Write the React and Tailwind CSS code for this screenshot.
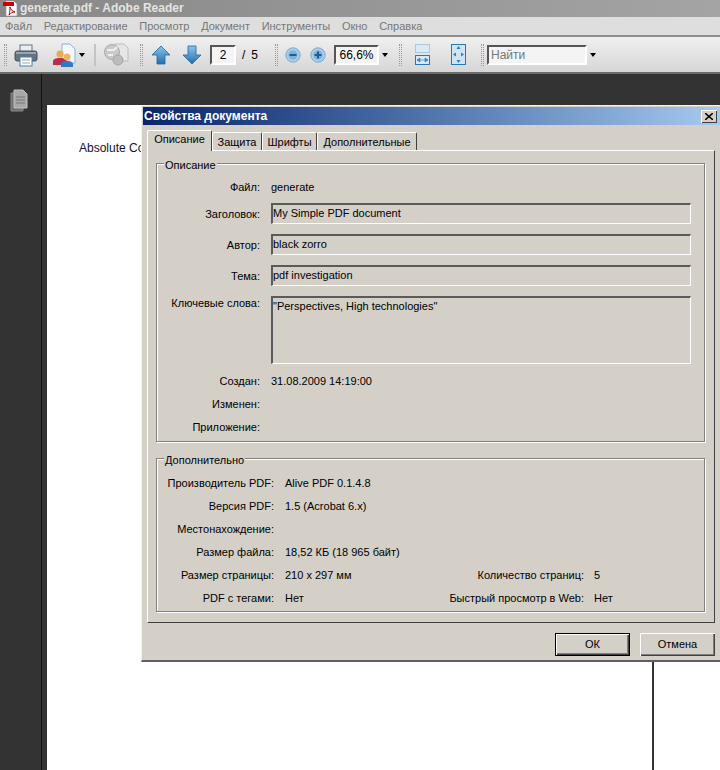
import React from "react";

const font = { fontFamily: '"Liberation Sans", Arial, sans-serif' };

const Grip = () => <div className="mx-[4px] h-[22px] w-[3px] border-x border-dotted border-[#9a9a9a]" />;

const Caret = () => (
  <svg width="6" height="4" viewBox="0 0 6 4" className="mx-[3px]">
    <path d="M0 0h6L3 4z" fill="#000" />
  </svg>
);

const PdfIcon = () => (
  <svg width="17" height="17" viewBox="0 0 17 17">
    <path d="M4 1h8l3 3v12H4z" fill="#fff" stroke="#999" strokeWidth="0.7" />
    <rect x="1" y="2" width="11" height="4" fill="#c00" />
    <path d="M7 15c1-3 1-6 1-8 1 3 2 4 5 5-3 0-4 1-6 3z" fill="none" stroke="#c00" />
  </svg>
);

const Printer = () => (
  <svg width="24" height="24" viewBox="0 0 24 24">
    <rect x="6" y="2" width="12" height="7" fill="#e8edf2" stroke="#6b7680" />
    <rect x="1" y="8" width="22" height="10" rx="2" fill="#66737f" stroke="#46525c" />
    <rect x="2" y="9" width="20" height="2" fill="#9aa5af" />
    <rect x="6" y="14" width="12" height="9" fill="#fff" stroke="#3f86b8" />
    <path d="M8 17h8M8 20h8" stroke="#9aa" />
  </svg>
);

const Share = () => (
  <svg width="24" height="24" viewBox="0 0 24 24">
    <path d="M10 1h8l5 5v14H10z" fill="#f4f7fb" stroke="#8fb0d3" />
    <circle cx="8" cy="11" r="3.5" fill="#eea84e" />
    <path d="M1 22v-3c0-3 2-4 7-4s7 1 7 4v3z" fill="#b5304d" />
    <circle cx="15" cy="14" r="3.5" fill="#f0b35c" />
    <path d="M9 24v-2c0-3 2-4 6-4s6 1 6 4v2z" fill="#2c7cc0" />
  </svg>
);

const Review = () => (
  <svg width="26" height="24" viewBox="0 0 26 24">
    <path d="M12 1h9l4 4v13H12z" fill="#e6e6e6" stroke="#bdbdbd" />
    <circle cx="9" cy="9" r="7.5" fill="#c9c9c9" stroke="#aaa" />
    <path d="M4 7h7l3-3M5 12h5" stroke="#eee" strokeWidth="2" fill="none" />
    <circle cx="15" cy="17" r="5" fill="#bcbcbc" stroke="#a5a5a5" />
  </svg>
);

const Arrow = ({ down }) => (
  <svg width="20" height="20" viewBox="0 0 20 20" className={down ? "rotate-180" : ""}>
    <defs>
      <linearGradient id={down ? "ad" : "au"} x1="0" y1="0" x2="0" y2="1">
        <stop offset="0" stopColor={down ? "#1f6fb0" : "#8cc4ea"} />
        <stop offset="1" stopColor={down ? "#8cc4ea" : "#1f6fb0"} />
      </linearGradient>
    </defs>
    <path d="M10 1l9 9h-5v9H6v-9H1z" fill={`url(#${down ? "ad" : "au"})`} stroke="#1d679f" strokeWidth="0.8" />
  </svg>
);

const Zoom = ({ plus }) => (
  <svg width="16" height="16" viewBox="0 0 16 16">
    <circle cx="8" cy="8" r="7.2" fill="#a9cde8" stroke="#7fa8c9" />
    <circle cx="8" cy="8" r="4.5" fill="#7fb0d8" />
    <path d={plus ? "M4.5 8h7M8 4.5v7" : "M4.5 8h7"} stroke="#1c5c9c" strokeWidth="2" />
  </svg>
);

const FitWidth = () => (
  <svg width="17" height="22" viewBox="0 0 17 22">
    <rect x="1.5" y="0.5" width="14" height="8" fill="#dbe9f5" stroke="#a9c8e2" />
    <rect x="1.5" y="11.5" width="14" height="9" fill="#dbe9f5" stroke="#2b76b4" />
    <path d="M3 16h11M3 16l3-2v4zM14 16l-3-2v4z" fill="#3d87c2" stroke="#3d87c2" strokeWidth="0.7" />
  </svg>
);

const FitPage = () => (
  <svg width="17" height="22" viewBox="0 0 17 22">
    <rect x="1.5" y="0.5" width="14" height="20" fill="#cfe3f4" stroke="#2b76b4" />
    <path d="M8.5 2l2 3h-4zM8.5 19l2-3h-4zM3 10.5l3-2v4zM14 10.5l-3-2v4z" fill="#2f7cba" />
  </svg>
);

const PagesIcon = () => (
  <svg width="18" height="23" viewBox="0 0 18 23">
    <path d="M1 4h12v18H1z" fill="#6f6f6f" stroke="#8a8a8a" />
    <path d="M4 1h9l4 4v14H4z" fill="#a8a8a8" stroke="#c0c0c0" />
    <path d="M6 8h9M6 11h9M6 14h9" stroke="#777" />
  </svg>
);

const Field = ({ value, className }) => (
  <div className={`ml-[11px] w-[420px] border border-t-2 border-l-2 border-t-[#5a5a5a] border-l-[#5a5a5a] border-r-white border-b-white bg-[#d4d0c8] text-[11px] leading-[15px] text-black ${className}`}>
    {value}
  </div>
);

const Label = ({ children, wide }) => (
  <div className={`${wide ? "w-[117px]" : "w-[103px]"} shrink-0 whitespace-nowrap text-right text-[11px] leading-[14px] text-black`}>
    {children}
  </div>
);

const Row = ({ label, value, wide, className }) => (
  <div className={`flex items-center ${className}`}>
    <Label wide={wide}>{label}</Label>
    <div className="ml-[11px] h-[14px] text-[11px] leading-[14px] text-black">{value}</div>
  </div>
);

const Group = ({ title, className, children }) => (
  <div className={`relative border border-[#808080] shadow-[inset_1px_1px_0_#fff,1px_1px_0_#fff] ${className}`}>
    <div className="absolute left-[7px] top-[-5px] bg-[#d4d0c8] px-[1px] text-[11px] leading-[13px] text-black">{title}</div>
    {children}
  </div>
);

const Tab = ({ children, active, className }) => (
  <div
    className={
      active
        ? `relative z-10 flex h-[21px] items-center justify-center rounded-t-[2px] border border-b-0 border-l-white border-t-white border-r-[#404040] bg-[#d4d0c8] pb-[3px] text-[11px] text-black ${className}`
        : `mt-[2px] flex h-[19px] items-center justify-center rounded-t-[2px] border border-b-0 border-l-white border-t-white border-r-[#404040] bg-[#d4d0c8] text-[11px] text-black ${className}`
    }
  >
    {children}
  </div>
);

const Button = ({ children, primary }) => (
  <div
    className={
      primary
        ? "flex h-[23px] w-[75px] items-center justify-center border border-black bg-[#d4d0c8] text-[11px] text-black shadow-[inset_1px_1px_0_#fff,inset_-1px_-1px_0_#404040,inset_-2px_-2px_0_#808080]"
        : "flex h-[23px] w-[75px] items-center justify-center bg-[#d4d0c8] text-[11px] text-black shadow-[inset_1px_1px_0_#fff,inset_-1px_-1px_0_#404040,inset_-2px_-2px_0_#808080]"
    }
  >
    {children}
  </div>
);

const PropertiesDialog = () => (
  <div className="absolute left-[141px] top-[105px] flex h-[557px] w-[600px] flex-col border-t border-l border-t-[#f4f2ec] border-l-[#f4f2ec] border-b-2 border-b-[#5f5f5f] bg-[#d4d0c8] pl-[1px] pt-[1px]">
    <div className="flex h-[18px] w-[578px] items-center justify-between bg-gradient-to-r from-[#0a246a] to-[#a6caf0] pl-[1px] pr-[4px]">
      <span className="text-[12px] font-bold text-white">Свойства документа</span>
      <div className="flex h-[13px] w-[16px] items-center justify-center bg-[#d4d0c8] shadow-[inset_1px_1px_0_#fff,inset_-1px_-1px_0_#404040]">
        <svg width="8" height="7" viewBox="0 0 8 7">
          <path d="M0 0l8 7M8 0L0 7" stroke="#000" strokeWidth="1.5" />
        </svg>
      </div>
    </div>

    <div className="ml-[4px] mt-[5px] flex">
      <Tab active className="w-[65px]">Описание</Tab>
      <Tab className="w-[50px]">Защита</Tab>
      <Tab className="w-[55px]">Шрифты</Tab>
      <Tab className="w-[100px]">Дополнительные</Tab>
    </div>

    <div className="-mt-[1px] ml-[4px] h-[473px] w-[568px] border border-l-white border-t-white border-r-[#404040] border-b-[#404040] pl-[8px] pt-[12px]">
      <Group title="Описание" className="h-[279px] w-[549px] pt-[16px]">
        <Row label="Файл:" value="generate" />
        <div className="mt-[9px] flex items-start">
          <div className="mt-[4px]"><Label>Заголовок:</Label></div>
          <Field value="My Simple PDF document" className="h-[21px] pt-[1px]" />
        </div>
        <div className="mt-[10px] flex items-start">
          <div className="mt-[4px]"><Label>Автор:</Label></div>
          <Field value="black zorro" className="h-[21px] pt-[1px]" />
        </div>
        <div className="mt-[10px] flex items-start">
          <div className="mt-[4px]"><Label>Тема:</Label></div>
          <Field value="pdf investigation" className="h-[21px] pt-[1px]" />
        </div>
        <div className="mt-[10px] flex items-start">
          <Label>Ключевые слова:</Label>
          <Field value={'"Perspectives, High technologies"'} className="h-[68px] pt-[1px]" />
        </div>
        <Row label="Создан:" value="31.08.2009 14:19:00" className="mt-[10px]" />
        <Row label="Изменен:" value="" className="mt-[9px]" />
        <Row label="Приложение:" value="" className="mt-[9px]" />
      </Group>

      <Group title="Дополнительно" className="mt-[16px] h-[154px] w-[549px] pt-[17px]">
        <Row wide label="Производитель PDF:" value="Alive PDF 0.1.4.8" />
        <Row wide label="Версия PDF:" value="1.5 (Acrobat 6.x)" className="mt-[9px]" />
        <Row wide label="Местонахождение:" value="" className="mt-[9px]" />
        <Row wide label="Размер файла:" value="18,52 КБ (18 965 байт)" className="mt-[9px]" />
        <div className="mt-[9px] flex items-center">
          <div className="w-[300px]">
            <Row wide label="Размер страницы:" value="210 x 297 мм" />
          </div>
          <div className="w-[127px] whitespace-nowrap text-right text-[11px] leading-[14px] text-black">Количество страниц:</div>
          <div className="ml-[10px] text-[11px] leading-[14px] text-black">5</div>
        </div>
        <div className="mt-[9px] flex items-center">
          <div className="w-[300px]">
            <Row wide label="PDF с тегами:" value="Нет" />
          </div>
          <div className="flex w-[127px] justify-end whitespace-nowrap text-[11px] leading-[14px] text-black">Быстрый просмотр в Web:</div>
          <div className="ml-[10px] text-[11px] leading-[14px] text-black">Нет</div>
        </div>
      </Group>
    </div>

    <div className="ml-[412px] mt-[10px] flex gap-[10px]">
      <Button primary>ОК</Button>
      <Button>Отмена</Button>
    </div>
  </div>
);

export default function App() {
  return (
    <div className="relative flex h-[770px] w-[720px] flex-col overflow-hidden bg-[#333333]" style={font}>
      <div className="flex h-[17px] items-center bg-gradient-to-r from-[#888888] to-[#a4a4a4] pl-[2px]">
        <PdfIcon />
        <span className="ml-[1px] text-[12px] font-bold leading-[17px] text-[#e4e4e0]">generate.pdf - Adobe Reader</span>
      </div>

      <div className="flex h-[20px] items-center gap-[11.7px] border-b-2 border-b-[#8f8f8a] bg-[#dedede] pl-[5px] text-[11px] text-[#777777]">
        <span>Файл</span>
        <span>Редактирование</span>
        <span>Просмотр</span>
        <span>Документ</span>
        <span>Инструменты</span>
        <span>Окно</span>
        <span>Справка</span>
      </div>

      <div className="flex h-[37px] items-center border-b-2 border-b-[#6a6a6a] bg-gradient-to-b from-[#f0f0f0] to-[#d6d6d6] text-[12px] text-black">
        <Grip />
        <div className="ml-[3px]"><Printer /></div>
        <div className="ml-[14px]"><Share /></div>
        <Caret />
        <div className="ml-[6px] h-[22px] w-[2px] bg-[#c4c4c4]" />
        <div className="ml-[7px]"><Review /></div>
        <div className="ml-[7px]"><Grip /></div>
        <div className="ml-[4px]"><Arrow /></div>
        <div className="ml-[11px]"><Arrow down /></div>
        <div className="ml-[8px] flex h-[20px] w-[26px] items-center justify-center border-2 border-t-[#555555] border-l-[#555555] border-r-white border-b-white bg-[#f4f4f4]">2</div>
        <span className="ml-[6px]">/</span>
        <span className="ml-[6px]">5</span>
        <div className="ml-[13px]"><Grip /></div>
        <div className="ml-[3px]"><Zoom /></div>
        <div className="ml-[9px]"><Zoom plus /></div>
        <div className="ml-[8px] flex h-[20px] w-[45px] items-center justify-center border-2 border-t-[#555555] border-l-[#555555] border-r-white border-b-white bg-[#f4f4f4]">66,6%</div>
        <Caret />
        <div className="ml-[4px]"><Grip /></div>
        <div className="ml-[8px]"><FitWidth /></div>
        <div className="ml-[19px]"><FitPage /></div>
        <div className="ml-[10px]"><Grip /></div>
        <div className="-ml-[1px] flex h-[20px] w-[100px] items-center border-2 border-t-[#555555] border-l-[#555555] border-r-white border-b-white bg-[#f4f4f4] pl-[2px] text-[#777777]">Найти</div>
        <Caret />
      </div>

      <div className="flex min-h-0 flex-1">
        <div className="w-[42px] shrink-0 border-r border-r-[#111111] pl-[10px] pt-[15px]">
          <PagesIcon />
        </div>
        <div className="ml-[5px] mt-[31px] w-[607px] shrink-0 border-r-2 border-r-[#333333] bg-white pl-[32px] pt-[34px] text-[12px] text-[#111133]">
          Absolute Co
        </div>
        <div className="mt-[31px] flex-1 bg-white" />
      </div>

      <PropertiesDialog />
    </div>
  );
}
